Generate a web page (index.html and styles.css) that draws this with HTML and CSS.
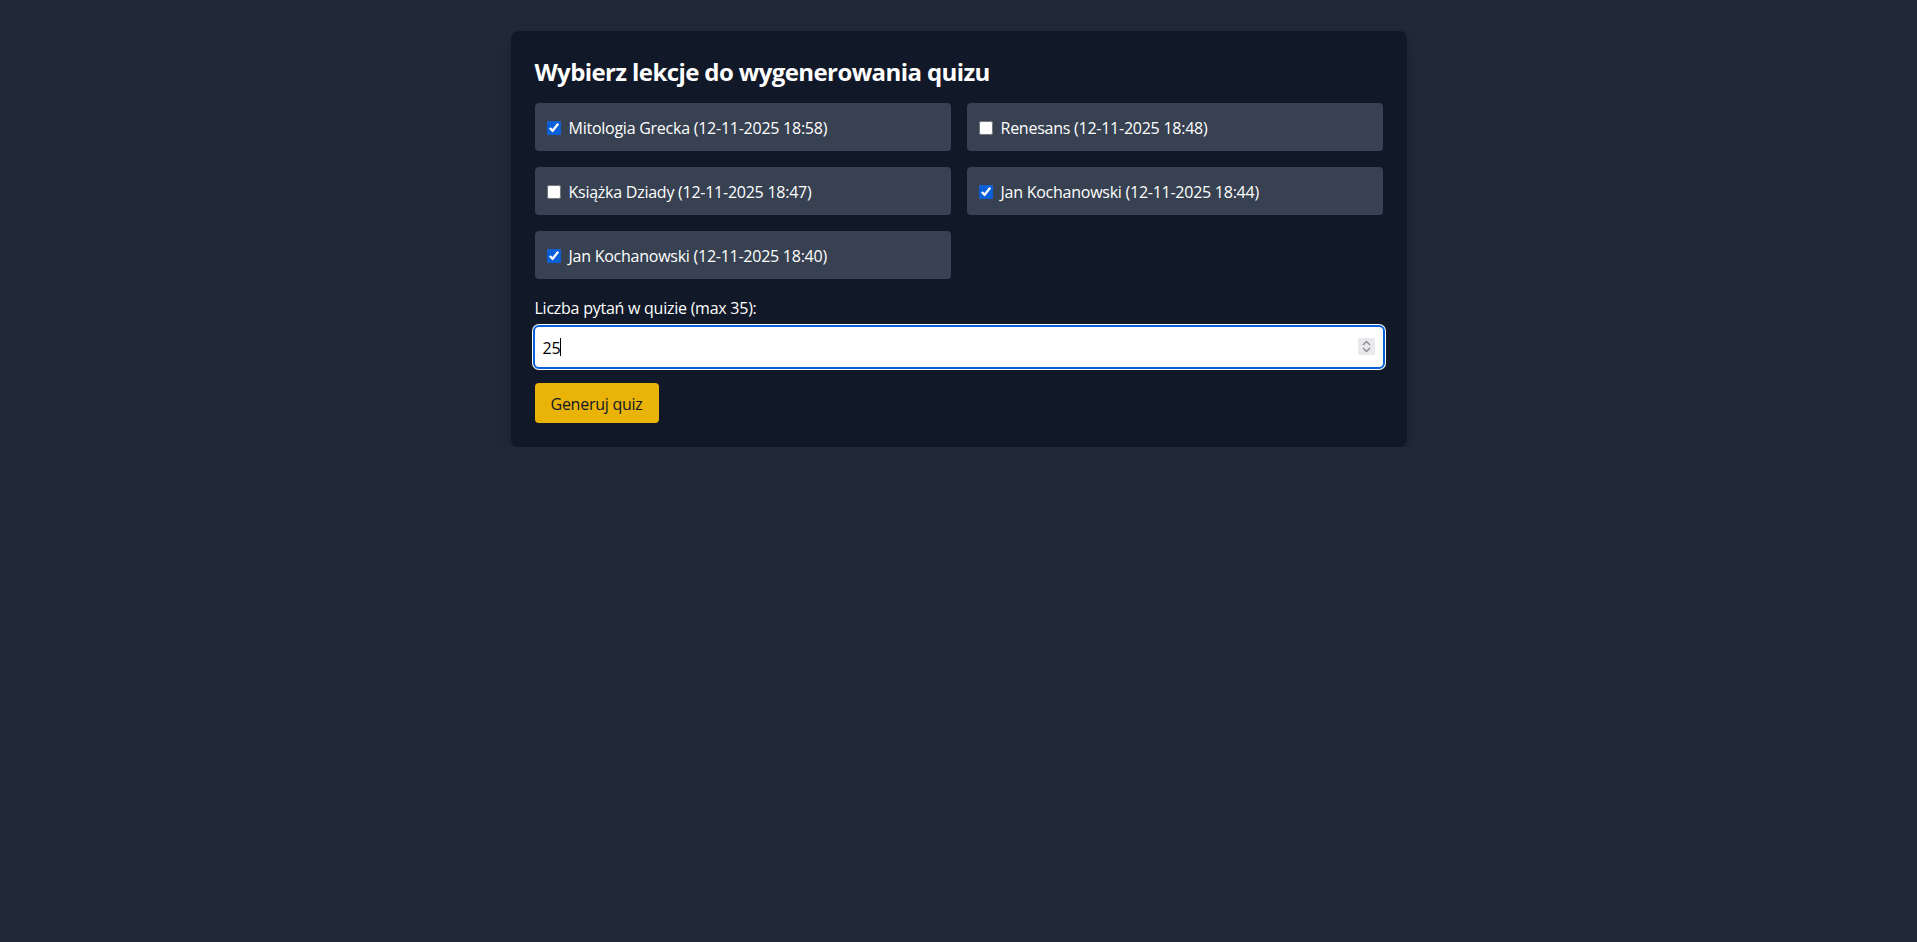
FILE: index.html
```html
<!DOCTYPE html>
<html lang="pl">
<head>
    <meta charset="UTF-8">
    <meta name="viewport" content="width=device-width, initial-scale=1.0">
    <title>Generator quizu</title>
    <link rel="stylesheet" href="styles.css">
</head>
<body>

<div class="card">
    <h1>Wybierz lekcje do wygenerowania quizu</h1>

    <div class="lessons">
        <label class="lesson"><input type="checkbox" checked> Mitologia Grecka (12-11-2025 18:58)</label>
        <label class="lesson"><input type="checkbox"> Renesans (12-11-2025 18:48)</label>
        <label class="lesson"><input type="checkbox"> Książka Dziady (12-11-2025 18:47)</label>
        <label class="lesson"><input type="checkbox" checked> Jan Kochanowski (12-11-2025 18:44)</label>
        <label class="lesson"><input type="checkbox" checked> Jan Kochanowski (12-11-2025 18:40)</label>
    </div>

    <label class="count-label" for="count">Liczba pytań w quizie (max 35):</label>
    <div class="count-field">
        <input id="count" type="text" value="25">
        <span class="caret"></span>
        <span class="spinner">
            <svg width="9" height="13" viewBox="0 0 9 13"><path d="M1 5 L4.5 1.5 L8 5 M1 8 L4.5 11.5 L8 8" fill="none" stroke="#8a8a92" stroke-width="1.4"/></svg>
        </span>
    </div>

    <button class="generate">Generuj quiz</button>
</div>

</body>
</html>
```

FILE: styles.css
```css
* {
    box-sizing: border-box;
}
body {
    margin: 0;
    background: #1f2937;
    color: #fff;
    font-family: "Open Sans", "Noto Sans", sans-serif;
    font-size: 16px;
    line-height: 24px;
    letter-spacing: -0.25px;
    padding-top: 31px;
}
.card {
    width: 896px;
    margin: 0 auto;
    background: #111827;
    border-radius: 8px;
    padding: 25px 24px 24px;
    box-shadow: 0 10px 15px -3px rgba(0, 0, 0, 0.25), 0 4px 6px -4px rgba(0, 0, 0, 0.2);
}
h1 {
    font-size: 24px;
    line-height: 32px;
    font-weight: 700;
    letter-spacing: -0.6px;
    margin: 0 0 15px;
}
.lessons {
    display: grid;
    grid-template-columns: 1fr 1fr;
    gap: 16px;
    margin-bottom: 16px;
}
.lesson {
    display: flex;
    align-items: center;
    background: #374151;
    border-radius: 4px;
    padding: 13px 12px 11px;
}
.lesson input {
    width: 14px;
    height: 14px;
    margin: 0 8px 0 0;
    accent-color: #0a5fd6;
}
.count-label {
    display: block;
    padding-top: 1px;
    margin-bottom: 7px;
}
.count-field {
    position: relative;
    margin-bottom: 16px;
}
.count-field input {
    display: block;
    width: 100%;
    height: 40px;
    padding: 9px 8px 7px;
    border: none;
    border-radius: 4px;
    font: inherit;
    letter-spacing: inherit;
    color: #000;
    background: #fff;
    outline: 2px solid #0a5fd6;
    box-shadow: 0 0 0 3px #fff;
}
.caret {
    position: absolute;
    left: 25px;
    top: 11px;
    width: 1px;
    height: 18px;
    background: #000;
}
.spinner {
    position: absolute;
    right: 8px;
    top: 11px;
    width: 17px;
    height: 17px;
    background: #e9e9ed;
    display: flex;
    align-items: center;
    justify-content: center;
}
.generate {
    background: #eab308;
    color: #111827;
    border: none;
    border-radius: 4px;
    padding: 9px 16px 7px;
    font: inherit;
    letter-spacing: inherit;
    cursor: pointer;
}
```
